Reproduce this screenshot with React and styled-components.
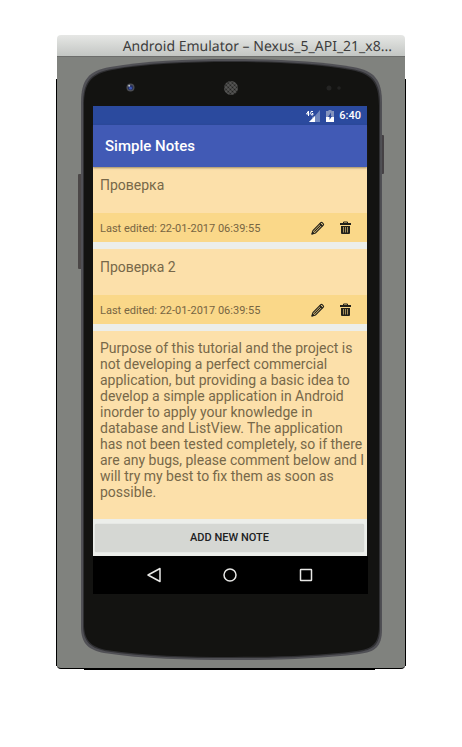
import React from "react";
import styled, { createGlobalStyle } from "styled-components";

const GlobalStyle = createGlobalStyle`
  * { box-sizing: border-box; }
  body {
    margin: 0;
    background: #fff;
    font-family: Roboto, sans-serif;
  }
`;

const Page = styled.main`
  padding: 35px 57px 76px;
`;

const EmulatorWindow = styled.section`
  position: relative;
`;

const TitleBar = styled.header`
  height: 22px;
  padding: 0 13px;
  border-radius: 4px 4px 0 0;
  border-bottom: 1px solid #6c6d6b;
  background: linear-gradient(#e6e7e5, #c3c6c3);
  color: #3d3d3d;
  font: 14px/23px "Noto Sans", sans-serif;
  text-align: right;
  text-rendering: geometricPrecision;
  white-space: nowrap;
  overflow: hidden;
`;

const Backdrop = styled.div`
  position: relative;
  padding: 1px 23px 8px 24px;
  background: #80827e;
  border-bottom: 1px solid #000;
  border-radius: 0 0 4px 4px;

  &::before {
    content: "";
    position: absolute;
    inset: 22px -1px 2px;
    border: solid #000;
    border-width: 0 1px;
  }

  &::after {
    content: "";
    position: absolute;
    top: 100%;
    left: 27px;
    right: 30px;
    height: 2px;
    background: #000;
  }
`;

const Phone = styled.div`
  position: relative;
  padding: 0 15px 66px 12px;
`;

const PhoneArt = styled.svg`
  position: absolute;
  inset: 0;
  width: 100%;
  height: 100%;
  overflow: visible;
`;

const Bezel = styled.div`
  position: relative;
  display: flex;
  align-items: center;
  justify-content: space-between;
  height: 48px;
  padding: 11px 25px 0 33px;
`;

const Screen = styled.div`
  position: relative;
  background: #eceeea;
`;

const StatusBar = styled.div`
  display: flex;
  align-items: center;
  justify-content: flex-end;
  height: 19px;
  padding: 0 6px;
  background: #2b4a9e;
  color: #fff;
  font-size: 11px;
  font-weight: 500;

  svg + svg { margin: 0 5px 0 6px; }
`;

const AppBar = styled.div`
  position: relative;
  height: 42px;
  padding: 0 12px;
  background: #415ab5;
  box-shadow: 0 1px 2px rgba(60, 50, 30, 0.5);
  color: #fff;
`;

const AppTitle = styled.h1`
  margin: 0;
  font-size: 15px;
  font-weight: 500;
  line-height: 42px;
`;

const NoteList = styled.div`
  display: flex;
  flex-direction: column;
  gap: 7px;
`;

const Note = styled.article`
  background: #fce0aa;
`;

const NoteText = styled.p`
  margin: 0;
  min-height: 46px;
  padding: ${(p) => (p.$long ? "9px 2px 19px 7px" : "10px 2px 10px 7px")};
  color: #776849;
  font-size: 14px;
  line-height: 16px;
`;

const NoteFooter = styled.footer`
  display: flex;
  align-items: center;
  height: 29px;
  padding: 0 15px 0 7px;
  background: #fad889;
  color: #776542;
`;

const Edited = styled.time`
  flex: 1;
  font-size: 11px;
  line-height: 18px;
  padding-top: 2px;
  white-space: nowrap;
`;

const IconButton = styled.button`
  display: flex;
  margin: 0 0 0 14px;
  padding: 0;
  border: 0;
  background: none;
  color: #22211a;
`;

const ActionBar = styled.div`
  padding: 5px 3px 4px 2px;
`;

const AddButton = styled.button`
  display: block;
  width: 100%;
  height: 28px;
  padding: 0;
  border: 0;
  border-radius: 2px;
  background: #d5d7d3;
  box-shadow: 0 0 1px #b5b7b3;
  color: #20211f;
  font: 500 11px/28px Roboto, sans-serif;
`;

const NavBar = styled.nav`
  display: flex;
  justify-content: center;
  gap: 60px;
  height: 38px;
  margin-right: -1px;
  padding-right: 2px;
  background: #000;
`;

const NavButton = styled.button`
  display: flex;
  align-items: center;
  padding: 0;
  border: 0;
  background: none;
  color: #e8e8e6;
`;

const PHONE_OUTLINE =
  "M0 45C0 22 7 13 29 9C63 3 105 1 150 1C195 1 238 3 272 9C294 13 301 22 301 45V571C301 589 294 594 278 596C238 601 195 602 150 602C105 602 63 601 23 595C8 592 0 586 0 569Z";

function PhoneBody() {
  return (
    <PhoneArt viewBox="0 0 301 602" preserveAspectRatio="none" aria-hidden="true">
      <rect x="-3" y="116" width="4" height="95" rx="1" fill="#4b4747" />
      <rect x="300" y="77" width="3" height="39" rx="1" fill="#454144" />
      <path d={PHONE_OUTLINE} fill="#505055" />
      <path
        d={PHONE_OUTLINE}
        fill="#303033"
        transform="translate(2 2) scale(.987 .9935)"
      />
      <path
        d={PHONE_OUTLINE}
        fill="#131311"
        transform="translate(3 3) scale(.98 .99)"
      />
    </PhoneArt>
  );
}

function Camera() {
  return (
    <svg width="9" height="9" viewBox="0 0 9 9" aria-hidden="true">
      <circle cx="4.5" cy="4.5" r="4" fill="#4b4d53" />
      <circle cx="4.5" cy="4.5" r="2.6" fill="#263062" />
      <circle cx="4.5" cy="5.2" r="1.4" fill="#3c58b8" />
      <circle cx="3.2" cy="2.8" r="1" fill="#c1c6c9" />
    </svg>
  );
}

function Speaker() {
  return (
    <svg width="14" height="14" viewBox="0 0 14 14" aria-hidden="true">
      <defs>
        <pattern id="mesh" width="3" height="3" patternUnits="userSpaceOnUse" patternTransform="rotate(45)">
          <rect width="3" height="3" fill="#5c5c5a" />
          <circle cx="1.5" cy="1.5" r="1.1" fill="#1d1d1c" />
        </pattern>
      </defs>
      <circle cx="7" cy="7" r="7" fill="url(#mesh)" />
    </svg>
  );
}

function Sensors() {
  return (
    <svg width="16" height="6" viewBox="0 0 16 6" aria-hidden="true">
      <circle cx="3" cy="3" r="2.5" fill="#242423" />
      <circle cx="13" cy="3" r="1.8" fill="#222221" />
    </svg>
  );
}

function SignalIcon() {
  return (
    <svg width="14" height="12" viewBox="0 0 14 12" aria-label="4G">
      <path d="M14 0V12H3L6 9V7L9 6Z" fill="#7187bd" />
      <path d="M3 12L9 6V12Z" fill="#fff" />
      <path
        d="M2.5 6V1L.5 4H3.5M7 1.8Q6 .7 5 1.7Q4.4 3 5 4.5Q6 5.6 7 4.7V3.5H6"
        fill="none"
        stroke="#fff"
        strokeWidth="1"
      />
    </svg>
  );
}

function BatteryIcon() {
  return (
    <svg width="8" height="12" viewBox="0 0 8 12" aria-label="Battery charging">
      <path d="M2.5 0H5.5V1H8V12H0V1H2.5Z" fill="#8494be" />
      <path d="M0 7H8V12H0Z" fill="#fff" />
      <path d="M5 2.5L2 7H3.5V10L6 6H5Z" fill="#2b4a9e" />
    </svg>
  );
}

function PencilIcon() {
  return (
    <svg width="14" height="14" viewBox="0 0 14 14" fill="none" stroke="currentColor" aria-hidden="true">
      <path d="M1 13L2 9.5L9.8 1.7Q10.5 1 11.2 1.7L12.3 2.8Q13 3.5 12.3 4.2L4.5 12Z" strokeWidth="1.1" />
      <path d="M3.3 10.7L10.3 3.7" strokeWidth="1.2" />
      <path d="M8.8 2.5L11.5 5.2" strokeWidth="1.5" />
      <path d="M1 13L1.6 10.8L3.2 12.4Z" fill="currentColor" />
    </svg>
  );
}

function TrashIcon() {
  return (
    <svg width="13" height="14" viewBox="0 0 13 14" aria-hidden="true">
      <path d="M4.5 2V1H8.5V2" fill="none" stroke="currentColor" strokeWidth="1" />
      <path
        fillRule="evenodd"
        d="M1 2H12V4H1ZM2 5H11V12Q11 13 10 13H3Q2 13 2 12ZM4 6V11.5H4.6V6ZM6.2 6V11.5H6.8V6ZM8.4 6V11.5H9V6Z"
        fill="currentColor"
      />
    </svg>
  );
}

const NOTES = [
  { text: "Проверка", edited: "22-01-2017 06:39:55" },
  { text: "Проверка 2", edited: "22-01-2017 06:39:55" },
  {
    text: "Purpose of this tutorial and the project is not developing a perfect commercial application, but providing a basic idea to develop a simple application in Android inorder to apply your knowledge in database and ListView. The application has not been tested completely, so if there are any bugs, please comment below and I will try my best to fix them as soon as possible.",
  },
];

export default function App() {
  return (
    <Page>
      <GlobalStyle />
      <EmulatorWindow>
        <TitleBar>Android Emulator – Nexus_5_API_21_x8...</TitleBar>
        <Backdrop>
          <Phone>
            <PhoneBody />
            <Bezel>
              <Camera />
              <Speaker />
              <Sensors />
            </Bezel>
            <Screen>
              <StatusBar>
                <SignalIcon />
                <BatteryIcon />
                <span>6:40</span>
              </StatusBar>
              <AppBar>
                <AppTitle>Simple Notes</AppTitle>
              </AppBar>
              <NoteList>
                {NOTES.map((note) => (
                  <Note key={note.text}>
                    <NoteText $long={!note.edited}>{note.text}</NoteText>
                    {note.edited && (
                      <NoteFooter>
                        <Edited>Last edited: {note.edited}</Edited>
                        <IconButton type="button" aria-label="Edit note">
                          <PencilIcon />
                        </IconButton>
                        <IconButton type="button" aria-label="Delete note">
                          <TrashIcon />
                        </IconButton>
                      </NoteFooter>
                    )}
                  </Note>
                ))}
              </NoteList>
              <ActionBar>
                <AddButton type="button">ADD NEW NOTE</AddButton>
              </ActionBar>
              <NavBar>
                <NavButton type="button" aria-label="Back">
                  <svg width="16" height="16" viewBox="0 0 16 16" fill="none" stroke="currentColor" strokeWidth="1.5">
                    <path d="M14 1.5V14.5L2 8Z" strokeLinejoin="round" />
                  </svg>
                </NavButton>
                <NavButton type="button" aria-label="Home">
                  <svg width="16" height="16" viewBox="0 0 16 16" fill="none" stroke="currentColor" strokeWidth="1.5">
                    <circle cx="8" cy="8" r="6" />
                  </svg>
                </NavButton>
                <NavButton type="button" aria-label="Recent apps">
                  <svg width="16" height="16" viewBox="0 0 16 16" fill="none" stroke="currentColor" strokeWidth="1.5">
                    <rect x="2.5" y="2.5" width="11" height="11" rx=".5" />
                  </svg>
                </NavButton>
              </NavBar>
            </Screen>
          </Phone>
        </Backdrop>
      </EmulatorWindow>
    </Page>
  );
}
